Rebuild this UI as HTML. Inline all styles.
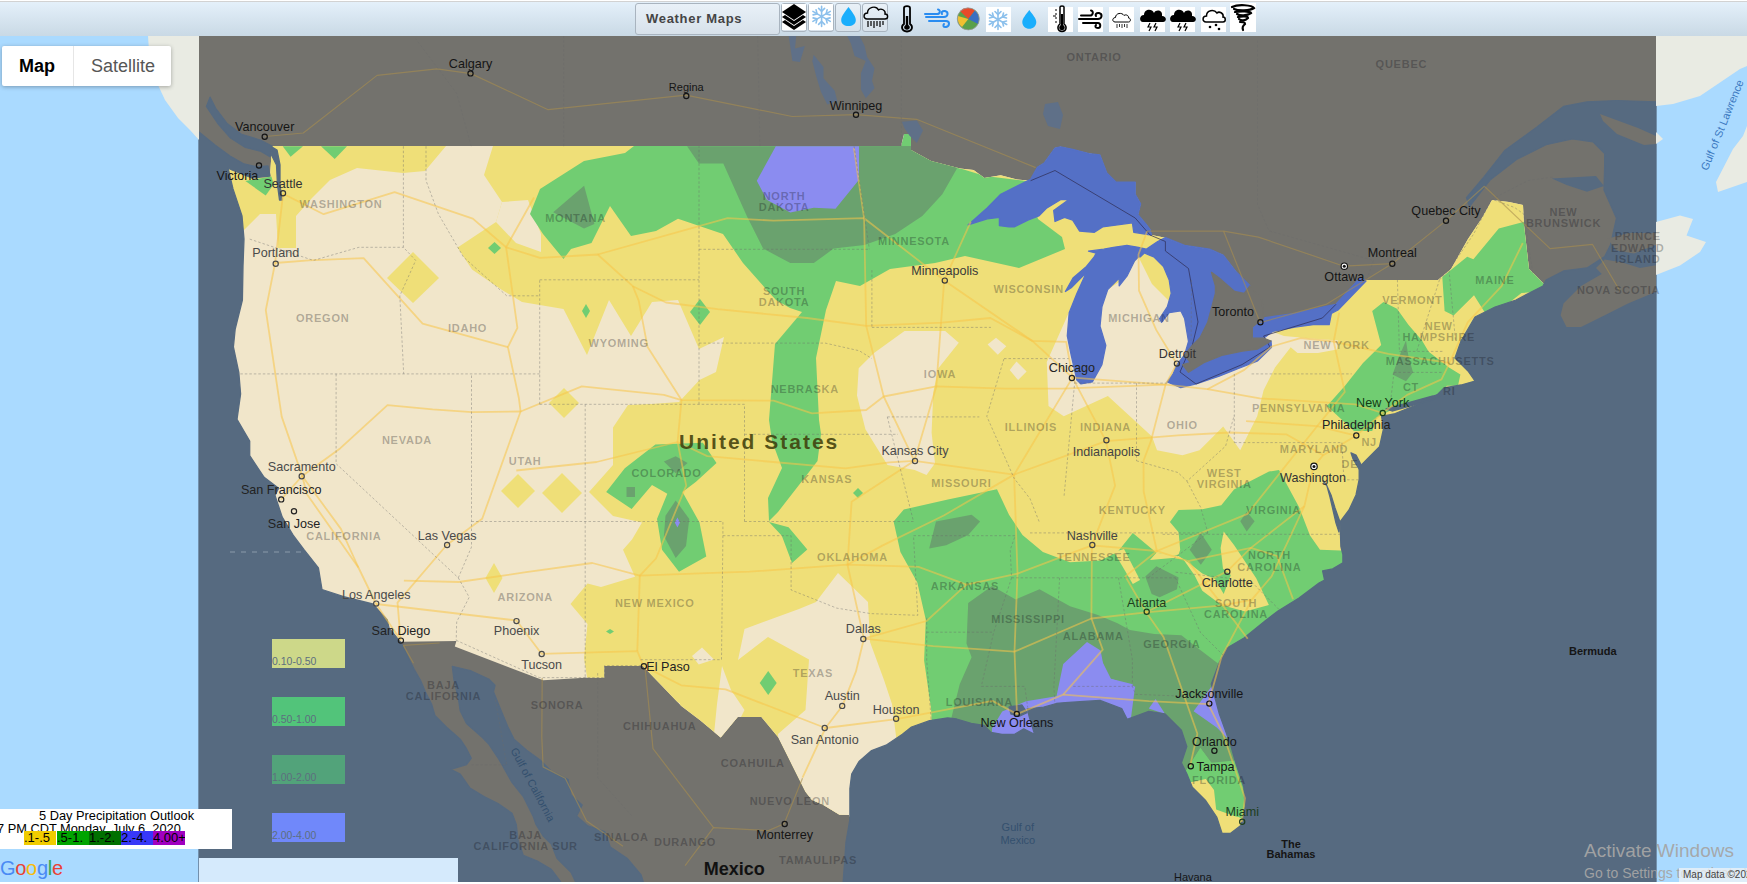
<!DOCTYPE html>
<html><head><meta charset="utf-8">
<style>
html,body{margin:0;padding:0;background:#fff;}
body{width:1747px;height:884px;overflow:hidden;position:relative;font-family:"Liberation Sans",sans-serif;}
#top{position:absolute;left:0;top:1px;width:1747px;height:35px;background:linear-gradient(#e4f0fa,#c9d9e5);border-top:1px solid #d2d2d2;box-sizing:border-box;}
#map{position:absolute;left:0;top:0;}
#wm{position:absolute;left:635px;top:3px;width:145px;height:32px;box-sizing:border-box;border:1px solid #a9b4bf;border-radius:3px;background:linear-gradient(#e9f1f8,#d7e1ea);font:bold 13px "Liberation Sans",sans-serif;color:#454545;line-height:30px;padding-left:10px;letter-spacing:0.7px;}
.ib{position:absolute;top:3px;width:26px;height:29px;box-sizing:border-box;border:1px solid #a9b4bf;border-radius:3px;background:linear-gradient(#e9f1f8,#d7e1ea);}
.wb{position:absolute;top:7px;width:25px;height:25px;background:#fff;}
#ctl{position:absolute;left:2px;top:46px;width:169px;height:40px;background:#fff;border-radius:2px;box-shadow:0 1px 4px rgba(0,0,0,.3);}
#ctl .m{position:absolute;left:0;top:0;width:70px;height:40px;font-size:18px;color:#000;text-align:center;line-height:40px;font-weight:bold;}
#ctl .s{position:absolute;left:71px;top:0;width:98px;height:40px;font-size:18px;color:#565656;text-align:center;line-height:40px;border-left:1px solid #e6e6e6;}
#leg{position:absolute;left:0;top:809px;width:232px;height:40px;background:#fff;}
#leg .t1{position:absolute;left:39px;top:-1px;font-size:12.8px;color:#000;white-space:nowrap;}
#leg .t2{position:absolute;left:-3px;top:12px;font-size:12.8px;color:#000;white-space:nowrap;}
#leg .bar{position:absolute;top:22px;height:14px;width:32px;font-size:13px;color:#000;line-height:14px;overflow:hidden;white-space:nowrap;}
#act1{position:absolute;left:1584px;top:840px;font-size:19px;color:rgba(165,165,165,.95);white-space:nowrap;}
#act2{position:absolute;left:1584px;top:865px;font-size:14px;color:rgba(165,165,165,.95);white-space:nowrap;}
#mapdata{position:absolute;left:1679px;top:868px;width:68px;height:14px;background:rgba(245,245,245,.7);font-size:10px;color:#444;line-height:14px;padding-left:4px;box-sizing:border-box;white-space:nowrap;overflow:hidden;}
#botbar{position:absolute;left:199px;top:858px;width:259px;height:24px;background:#d5eafc;}
</style></head><body>
<svg id="map" width="1747" height="884" viewBox="0 0 1747 884">
<rect x="0" y="36" width="199" height="846" fill="#aadaff"/>
<rect x="1656" y="36" width="91" height="846" fill="#aadaff"/>
<rect x="199" y="36" width="1457" height="846" fill="#73726d"/>
<clipPath id="dom"><path d="M272.0,146.0 L901.0,146.0 L904.0,134.0 L911.0,134.0 L911.0,150.0 L931.0,161.0 L960.0,168.5 L973.6,170.0 L984.4,178.0 L1000.7,175.3 L1017.0,179.4 L1030.6,180.7 L1037.4,167.2 L1044.2,163.1 L1055.0,148.1 L1060.5,146.8 L1072.7,149.5 L1089.0,153.6 L1099.9,154.9 L1106.6,172.6 L1116.1,182.1 L1135.2,182.1 L1135.2,194.3 L1140.6,203.8 L1137.9,214.7 L1146.0,224.2 L1150.1,229.6 L1151.4,235.0 L1165.4,237.7 L1184.6,245.4 L1209.6,249.2 L1223.0,255.0 L1236.5,272.3 L1238.0,285.0 L1232.0,300.0 L1240.0,322.0 L1263.0,324.0 L1295.0,318.0 L1324.7,311.0 L1336.0,308.0 L1363.0,280.0 L1438.0,280.0 L1451.0,269.0 L1468.0,239.0 L1482.0,218.0 L1492.0,200.0 L1509.0,202.0 L1523.0,205.0 L1524.0,225.0 L1529.0,269.0 L1560.0,300.0 L1600.0,350.0 L1600.0,860.0 L870.0,860.0 L849.0,815.0 L839.5,814.8 L822.6,804.6 L812.0,800.0 L805.5,791.8 L792.0,764.7 L778.4,737.5 L761.4,717.0 L737.7,717.0 L720.7,737.5 L700.4,720.6 L681.3,706.0 L642.8,665.9 L604.2,665.9 L604.2,677.8 L585.0,677.8 L543.2,680.3 L454.8,646.6 L456.4,641.1 L401.8,641.8 L380.0,642.0 L200.0,560.0 L200.0,175.0 L228.0,168.0 L270.0,176.0 Z"/></clipPath>
<path d="M272.0,146.0 L901.0,146.0 L904.0,134.0 L911.0,134.0 L911.0,150.0 L931.0,161.0 L960.0,168.5 L973.6,170.0 L984.4,178.0 L1000.7,175.3 L1017.0,179.4 L1030.6,180.7 L1037.4,167.2 L1044.2,163.1 L1055.0,148.1 L1060.5,146.8 L1072.7,149.5 L1089.0,153.6 L1099.9,154.9 L1106.6,172.6 L1116.1,182.1 L1135.2,182.1 L1135.2,194.3 L1140.6,203.8 L1137.9,214.7 L1146.0,224.2 L1150.1,229.6 L1151.4,235.0 L1165.4,237.7 L1184.6,245.4 L1209.6,249.2 L1223.0,255.0 L1236.5,272.3 L1238.0,285.0 L1232.0,300.0 L1240.0,322.0 L1263.0,324.0 L1295.0,318.0 L1324.7,311.0 L1336.0,308.0 L1363.0,280.0 L1438.0,280.0 L1451.0,269.0 L1468.0,239.0 L1482.0,218.0 L1492.0,200.0 L1509.0,202.0 L1523.0,205.0 L1524.0,225.0 L1529.0,269.0 L1560.0,300.0 L1600.0,350.0 L1600.0,860.0 L870.0,860.0 L849.0,815.0 L839.5,814.8 L822.6,804.6 L812.0,800.0 L805.5,791.8 L792.0,764.7 L778.4,737.5 L761.4,717.0 L737.7,717.0 L720.7,737.5 L700.4,720.6 L681.3,706.0 L642.8,665.9 L604.2,665.9 L604.2,677.8 L585.0,677.8 L543.2,680.3 L454.8,646.6 L456.4,641.1 L401.8,641.8 L380.0,642.0 L200.0,560.0 L200.0,175.0 L228.0,168.0 L270.0,176.0 Z" fill="#f1e6ca"/>
<g clip-path="url(#dom)">
<path d="M200.0,146.0 L446.0,146.0 L425.0,171.0 L403.0,173.0 L357.0,168.0 L330.0,180.0 L312.0,198.0 L296.0,216.0 L296.0,248.0 L278.0,248.0 L276.0,214.0 L260.0,214.0 L244.0,230.0 L200.0,230.0 Z" fill="#efdf78" />
<path d="M493.0,146.0 L1600.0,146.0 L1600.0,860.0 L900.0,850.0 L680.0,850.0 L680.0,703.0 L587.5,680.0 L584.0,658.0 L587.5,624.0 L570.5,604.0 L587.5,583.6 L601.0,587.0 L635.0,576.8 L623.0,549.7 L632.0,539.5 L642.0,522.5 L613.0,516.0 L589.0,492.0 L613.0,465.0 L613.0,427.5 L628.0,405.0 L652.0,404.0 L679.0,402.0 L699.5,380.0 L716.0,372.0 L724.0,337.0 L699.0,349.0 L678.0,300.0 L652.0,302.0 L631.0,336.0 L609.0,300.0 L587.0,355.0 L563.5,309.0 L522.0,302.0 L502.0,290.0 L472.0,269.5 L457.6,247.5 L496.0,222.0 L502.0,202.0 L484.0,175.0 Z" fill="#efdf78" />
<path d="M413.0,252.0 L439.0,278.0 L413.0,303.0 L387.0,278.0 Z" fill="#efdf78" />
<path d="M518.0,474.0 L535.0,491.0 L518.0,508.0 L501.0,491.0 Z" fill="#efdf78" />
<path d="M562.0,473.0 L582.0,493.0 L562.0,513.0 L542.0,493.0 Z" fill="#efdf78" />
<path d="M494.0,563.0 L502.5,578.0 L494.0,593.0 L485.5,578.0 Z" fill="#efdf78" />
<path d="M564.0,388.0 L579.0,403.0 L564.0,418.0 L549.0,403.0 Z" fill="#efdf78" />
<path d="M502.0,202.0 L528.0,200.0 L541.0,234.0 L541.0,252.0 L516.0,243.0 L496.0,222.0 Z" fill="#f1e6ca" />
<path d="M838.0,573.0 L868.0,602.0 L870.0,642.0 L884.0,680.0 L892.0,704.0 L897.0,744.0 L935.0,870.0 L790.0,870.0 L782.0,800.0 L778.0,734.0 L805.5,710.0 L809.0,659.5 L768.0,637.0 L738.0,660.0 L744.5,629.0 L799.0,609.0 L816.0,602.0 Z" fill="#f1e6ca" />
<path d="M722.0,666.0 L731.0,690.0 L744.5,710.0 L734.0,731.0 L721.0,738.0 L714.0,734.0 L717.0,704.0 Z" fill="#f1e6ca" />
<path d="M692.0,656.0 L702.0,647.6 L714.0,659.5 L698.7,664.6 Z" fill="#f1e6ca" />
<path d="M904.5,330.9 L945.2,330.9 L958.8,342.8 L938.4,368.2 L933.3,392.0 L931.6,432.7 L935.0,463.2 L926.5,475.1 L914.7,470.0 L887.5,465.0 L865.4,429.3 L857.0,395.4 L858.7,368.2 L874.0,353.0 Z" fill="#f1e6ca" />
<path d="M987.6,344.5 L996.0,337.7 L1006.3,346.2 L997.8,354.7 Z" fill="#f1e6ca" />
<path d="M1009.7,370.0 L1016.5,361.4 L1026.6,371.6 L1018.1,380.0 Z" fill="#f1e6ca" />
<path d="M1046.8,362.0 L1048.5,406.0 L1063.8,416.3 L1107.9,395.9 L1152.0,436.6 L1157.0,450.2 L1182.5,455.3 L1199.5,450.2 L1223.2,426.4 L1240.2,450.2 L1257.2,416.3 L1263.6,390.3 L1275.0,367.6 L1290.7,347.3 L1297.5,353.0 L1318.0,353.0 L1337.0,349.5 L1338.0,340.5 L1308.8,338.2 L1284.0,336.0 L1268.0,330.0 L1277.5,317.9 L1196.0,284.0 L1169.0,301.0 L1152.0,284.0 L1138.4,256.8 L1121.4,280.5 L1101.0,294.0 L1074.0,301.0 Z" fill="#f1e6ca" />
<path d="M282.7,146.3 L303.0,146.3 L290.6,156.7 Z" fill="#71cd72" />
<path d="M321.0,146.3 L347.0,146.3 L334.7,159.0 Z" fill="#71cd72" />
<path d="M245.4,181.0 L271.4,176.4 L273.7,184.3 L265.7,195.6 Z" fill="#71cd72" />
<path d="M488.0,248.0 L494.5,242.0 L501.0,248.0 L494.5,254.0 Z" fill="#71cd72" />
<path d="M582.0,311.0 L586.0,304.0 L590.0,311.0 L586.0,318.0 Z" fill="#71cd72" />
<path d="M690.0,312.0 L700.0,299.0 L710.0,312.0 L700.0,325.0 Z" fill="#71cd72" />
<path d="M853.0,493.0 L858.0,488.0 L863.0,493.0 L858.0,498.0 Z" fill="#71cd72" />
<path d="M759.7,683.0 L768.2,671.0 L776.7,683.0 L768.2,695.0 Z" fill="#71cd72" />
<path d="M606.0,631.5 L610.0,629.0 L614.0,631.5 L610.0,634.0 Z" fill="#71cd72" />
<path d="M634.0,146.0 L901.0,146.0 L904.0,134.0 L911.0,134.0 L911.0,150.0 L931.0,161.0 L962.0,169.0 L985.0,176.0 L1026.0,181.0 L1038.0,219.0 L1062.0,237.0 L1065.0,249.0 L1019.0,268.0 L965.0,256.0 L935.0,263.0 L890.0,269.0 L860.0,286.0 L836.0,281.0 L826.0,310.0 L816.0,358.0 L819.0,420.0 L821.0,434.0 L817.5,461.0 L799.0,485.0 L778.0,512.0 L769.0,521.0 L768.0,498.0 L782.0,468.0 L772.0,441.0 L769.0,420.0 L775.0,344.0 L802.0,312.0 L790.0,308.0 L776.0,300.0 L765.0,288.0 L743.0,263.0 L723.0,234.0 L678.0,218.7 L656.0,231.0 L631.0,236.0 L610.0,206.0 L591.5,243.0 L571.0,249.0 L563.5,259.0 L543.0,234.0 L530.0,214.0 L540.0,189.0 L584.0,161.0 L625.0,153.0 Z" fill="#71cd72" />
<path d="M769.0,522.0 L781.8,535.8 L792.0,563.0 L807.3,549.4 L788.6,527.3 Z" fill="#71cd72" />
<path d="M655.4,444.5 L702.9,442.8 L716.5,463.0 L696.0,481.8 L682.5,492.0 L699.5,522.5 L706.3,556.5 L679.0,571.7 L662.0,549.7 L657.0,519.0 L667.3,493.7 L652.0,485.0 L631.6,509.0 L606.2,492.0 L624.8,468.2 Z" fill="#71cd72" />
<path d="M893.6,521.4 L903.8,509.6 L947.9,499.4 L997.0,489.2 L1009.0,514.7 L1022.5,535.0 L1042.9,552.0 L1070.0,562.2 L1100.6,560.5 L1117.5,552.0 L1132.8,533.0 L1156.4,552.8 L1172.0,556.0 L1178.6,554.4 L1180.2,549.7 L1178.6,532.3 L1169.9,522.0 L1178.6,510.0 L1202.3,509.3 L1221.3,505.3 L1234.0,489.5 L1269.0,471.6 L1279.0,470.0 L1299.0,507.0 L1310.0,535.4 L1320.0,549.7 L1600.0,560.0 L1600.0,860.0 L934.0,760.0 L931.0,708.0 L924.1,660.6 L925.8,619.8 L917.3,582.5 L900.4,552.0 Z" fill="#71cd72" />
<path d="M1372.2,311.0 L1383.5,302.0 L1397.0,308.8 L1408.4,324.7 L1422.0,340.5 L1428.7,351.8 L1449.0,367.6 L1460.4,374.4 L1458.0,385.7 L1446.8,385.7 L1440.0,394.8 L1433.3,398.2 L1390.3,410.6 L1376.7,417.4 L1372.2,431.0 L1354.0,431.0 L1327.0,406.0 L1345.0,385.7 L1363.0,363.0 L1381.2,345.0 Z" fill="#71cd72" />
<path d="M1449.0,271.5 L1467.2,256.8 L1473.4,259.2 L1498.8,228.6 L1524.3,221.8 L1530.5,268.0 L1541.9,277.0 L1560.0,290.0 L1521.5,293.0 L1510.0,302.0 L1494.3,311.0 L1485.3,313.3 L1474.0,295.2 L1453.6,315.6 L1444.6,311.0 L1442.3,277.0 Z" fill="#71cd72" />
<path d="M687.1,146.3 L961.0,146.0 L956.7,169.0 L942.3,194.3 L922.3,216.0 L895.2,234.0 L864.5,245.0 L833.7,248.6 L813.8,263.0 L790.3,263.0 L763.1,248.6 L746.8,216.0 L723.3,163.5 L698.9,163.5 Z" fill="#6aa26e" />
<path d="M553.2,212.2 L584.1,185.7 L594.4,224.0 L584.0,228.4 Z" fill="#6aa26e" />
<path d="M663.9,461.4 L675.7,456.3 L687.6,463.0 L675.7,473.3 Z" fill="#6aa26e" />
<path d="M626.5,487.0 L635.0,487.0 L635.0,497.0 L626.5,497.0 Z" fill="#6aa26e" />
<path d="M675.7,500.5 L689.3,519.0 L686.0,546.0 L675.7,558.0 L663.9,536.0 L665.5,515.7 Z" fill="#6aa26e" />
<path d="M929.2,548.6 L936.0,521.4 L971.6,514.7 L980.1,521.4 L968.2,535.0 L946.2,545.2 Z" fill="#6aa26e" />
<path d="M968.2,602.9 L992.0,585.9 L1015.7,599.5 L1039.5,589.3 L1070.0,606.3 L1097.2,614.8 L1117.5,623.2 L1129.9,629.9 L1154.3,633.9 L1181.4,635.3 L1195.0,646.1 L1216.7,662.4 L1240.0,680.0 L1240.0,760.0 L1211.3,762.8 L1200.4,747.9 L1184.1,773.7 L1150.0,760.0 L958.0,760.0 L951.3,718.3 L959.7,684.3 L971.6,657.2 L966.5,643.6 Z" fill="#6aa26e" />
<path d="M1145.3,576.6 L1156.4,566.3 L1178.6,577.4 L1177.0,589.3 L1159.6,597.2 L1151.7,594.0 Z" fill="#6aa26e" />
<path d="M1240.3,521.2 L1246.7,511.7 L1254.6,521.2 L1246.7,531.5 Z" fill="#6aa26e" />
<path d="M1189.7,549.7 L1200.8,533.0 L1211.8,549.7 L1200.8,564.7 Z" fill="#6aa26e" />
<path d="M1406.0,340.5 L1408.4,356.3 L1413.0,372.2 L1406.0,381.2 L1392.5,374.4 L1399.3,356.3 Z" fill="#6aa26e" />
<path d="M1156.4,552.8 L1178.6,556.0 L1188.0,562.3 L1202.3,573.4 L1215.0,579.0 L1223.7,594.0 L1230.8,575.0 L1223.0,568.7 L1220.6,548.0 L1223.7,531.5 L1234.0,545.0 L1246.7,564.0 L1256.2,578.2 L1268.9,605.1 L1245.1,611.4 L1221.3,605.1 L1202.3,590.8 L1194.4,575.0 L1183.3,559.2 L1172.3,558.0 L1150.0,560.0 Z" fill="#efdf78" />
<path d="M1114.0,552.0 L1132.8,584.0 L1140.0,580.0 L1124.0,549.0 Z" fill="#efdf78" />
<path d="M1184.1,773.7 L1200.4,747.9 L1211.3,762.8 L1235.7,776.4 L1243.8,790.0 L1260.0,825.2 L1189.6,800.0 Z" fill="#71cd72" />
<path d="M1180.0,784.5 L1205.8,779.1 L1214.0,790.0 L1216.7,814.4 L1238.4,817.1 L1260.0,828.0 L1227.5,850.0 L1216.7,833.4 L1180.0,795.4 Z" fill="#efdf78" />
<path d="M775.8,146.3 L859.0,146.3 L859.0,179.8 L835.5,208.8 L813.8,207.8 L790.3,212.4 L766.7,199.7 L756.8,180.7 Z" fill="#8b8cf0" />
<path d="M1087.0,641.9 L1100.6,650.4 L1105.7,677.5 L1132.8,684.3 L1134.5,691.0 L1129.4,730.0 L992.0,740.0 L992.0,728.4 L1002.2,711.5 L1026.0,701.3 L1056.5,696.2 L1063.2,664.0 Z" fill="#8b8cf0" />
<path d="M1100.0,657.0 L1110.9,678.7 L1135.3,686.8 L1127.1,719.4 L1100.0,703.0 Z" fill="#8b8cf0" />
<path d="M1148.8,708.5 L1155.6,699.0 L1165.1,714.0 Z" fill="#8b8cf0" />
<path d="M1193.6,711.3 L1211.3,686.8 L1214.0,681.4 L1227.5,738.4 L1216.7,727.5 Z" fill="#8b8cf0" />
<path d="M677.4,517.5 L680.0,522.5 L677.4,527.5 L674.8,522.5 Z" fill="#8b8cf0" />
</g>
<path d="M199.0,132.0 L215.0,145.0 L230.0,156.0 L244.0,164.0 L258.0,167.0 L268.0,166.0 L270.0,176.0 L252.0,178.0 L232.0,170.0 L228.0,168.0 L233.0,189.0 L242.0,216.0 L244.0,239.0 L243.0,266.0 L242.4,300.0 L235.2,329.0 L233.4,347.0 L238.8,372.4 L240.6,394.0 L237.0,419.4 L249.7,441.1 L249.7,455.6 L264.1,477.3 L278.6,488.2 L275.0,495.4 L282.2,517.1 L293.1,535.2 L304.0,549.7 L318.4,567.8 L322.0,589.5 L343.7,596.7 L372.7,604.0 L387.2,620.0 L389.0,628.0 L400.9,642.7 L403.6,648.1 L409.5,660.0 L414.3,669.5 L420.6,680.6 L425.3,691.7 L431.7,704.4 L434.9,715.4 L447.5,728.1 L460.2,739.2 L466.5,748.7 L471.3,758.2 L466.5,764.6 L450.7,769.3 L460.2,774.1 L470.0,788.0 L484.0,796.5 L498.0,803.5 L512.0,813.3 L516.3,824.5 L518.0,840.0 L523.3,855.4 L537.3,861.0 L551.3,869.4 L559.8,880.6 L562.0,884.0 L199.0,884.0 Z" fill="#566a80" stroke="#566a80" stroke-width="1.3" stroke-linejoin="round"/>
<path d="M452.3,666.3 L471.3,671.0 L488.7,679.0 L495.0,685.3 L493.5,691.7 L499.8,707.5 L507.7,726.5 L514.0,739.2 L526.7,750.3 L540.1,760.0 L551.3,771.2 L568.2,779.6 L571.0,795.0 L582.2,804.9 L576.6,816.1 L587.8,825.9 L604.6,831.5 L610.3,847.0 L627.1,858.2 L641.1,875.0 L643.9,884.0 L576.6,884.0 L571.0,872.2 L557.0,858.2 L551.3,844.1 L543.0,835.7 L536.0,824.5 L533.1,816.1 L523.3,796.5 L512.0,782.4 L500.9,762.8 L498.2,758.2 L488.7,744.0 L482.4,737.6 L466.5,723.4 L460.2,710.7 L458.6,699.6 L454.0,680.0 Z" fill="#566a80" stroke="#566a80" stroke-width="1.3" stroke-linejoin="round"/>
<path d="M843.0,884.0 L846.0,842.0 L849.9,819.4 L849.9,788.6 L851.7,774.1 L859.0,761.5 L871.6,750.6 L886.0,745.2 L902.4,734.3 L911.5,727.0 L929.6,720.7 L947.7,718.0 L956.7,719.0 L971.2,723.4 L983.9,725.3 L991.1,732.5 L1002.0,734.3 L1014.6,734.3 L1023.7,728.9 L1034.6,734.3 L1029.1,716.2 L1027.3,709.0 L1043.6,707.2 L1056.3,703.5 L1065.3,702.6 L1080.0,701.7 L1100.0,700.4 L1121.7,708.5 L1127.1,719.4 L1148.8,711.3 L1165.1,714.0 L1181.4,730.3 L1186.8,746.5 L1181.4,762.8 L1186.8,773.7 L1192.3,787.2 L1205.8,800.8 L1216.7,817.0 L1222.1,833.4 L1230.3,833.4 L1241.1,825.2 L1245.2,806.2 L1243.8,787.2 L1235.7,762.8 L1230.3,743.8 L1219.4,714.0 L1211.3,684.1 L1219.4,662.4 L1227.0,648.0 L1244.0,638.0 L1265.0,621.0 L1278.0,611.0 L1299.0,598.0 L1319.0,583.0 L1324.6,580.0 L1322.6,570.9 L1332.7,568.9 L1342.9,562.8 L1342.9,554.7 L1340.9,546.5 L1340.0,522.0 L1349.0,510.0 L1356.0,495.0 L1359.2,479.4 L1359.2,469.2 L1361.2,465.1 L1367.3,459.0 L1379.5,446.8 L1383.6,428.5 L1381.6,416.3 L1394.0,414.0 L1421.0,403.0 L1434.0,398.0 L1444.0,388.0 L1461.0,385.0 L1475.0,381.0 L1468.0,371.0 L1455.0,358.0 L1461.0,341.0 L1475.0,317.0 L1495.0,307.0 L1516.0,300.0 L1543.0,286.0 L1546.0,280.0 L1563.5,271.0 L1587.0,268.0 L1604.7,256.5 L1610.6,244.7 L1616.5,218.2 L1604.0,190.0 L1604.7,165.0 L1604.7,153.5 L1593.0,141.8 L1572.4,138.8 L1546.0,144.7 L1516.5,159.4 L1490.0,180.0 L1469.4,206.5 L1466.5,197.6 L1484.0,177.0 L1504.7,150.6 L1537.0,127.0 L1563.5,106.5 L1587.0,102.0 L1616.5,100.6 L1656.0,102.0 L1656.0,884.0 Z" fill="#566a80" stroke="#566a80" stroke-width="1.3" stroke-linejoin="round"/>
<path d="M1009.0,707.0 L1022.0,705.0 L1027.0,712.6 L1020.0,716.0 L1011.0,714.0 Z" fill="#566a80" stroke="#566a80" stroke-width="1.3" stroke-linejoin="round"/>
<path d="M1340.0,522.0 L1335.0,508.0 L1331.0,495.0 L1326.0,484.0 L1323.0,481.0 L1327.0,486.0 L1330.0,497.0 L1333.0,510.0 L1336.0,523.0 L1339.0,532.0 Z" fill="#566a80" stroke="#566a80" stroke-width="1.3" stroke-linejoin="round"/>
<path d="M1359.2,469.2 L1353.1,459.0 L1351.0,452.9 L1356.0,455.0 L1361.2,465.1 Z" fill="#566a80" stroke="#566a80" stroke-width="1.3" stroke-linejoin="round"/>
<path d="M1386.0,409.0 L1433.0,396.0 L1446.0,392.0 L1435.0,399.0 L1392.0,411.0 Z" fill="#566a80" stroke="#566a80" stroke-width="1.3" stroke-linejoin="round"/>
<path d="M210.1,97.2 L215.7,108.4 L226.8,123.2 L241.7,134.4 L260.2,140.0 L272.0,146.0 L270.0,156.6 L260.2,151.0 L245.4,147.4 L230.5,138.0 L217.6,123.2 L206.4,106.5 Z" fill="#566a80" stroke="#566a80" stroke-width="1.3" stroke-linejoin="round"/>
<path d="M272.0,147.0 L277.0,150.0 L280.0,165.0 L280.0,185.0 L282.0,200.0 L279.5,200.0 L277.5,185.0 L276.5,165.0 L271.0,154.0 Z" fill="#566a80" stroke="#566a80" stroke-width="1.3" stroke-linejoin="round"/>
<path d="M847.2,36.0 L859.6,36.0 L864.6,46.0 L867.1,57.1 L874.5,68.3 L872.0,80.8 L874.5,88.2 L865.8,98.2 L860.9,89.5 L860.9,73.3 L865.8,60.9 L854.6,55.9 L850.9,43.5 Z" fill="#5f7088" />
<path d="M813.6,54.7 L823.5,67.1 L823.5,78.3 L834.7,90.7 L837.2,100.7 L827.3,104.4 L821.0,92.0 L816.1,75.8 L812.3,60.9 Z" fill="#5f7088" />
<path d="M901.9,121.8 L916.8,120.6 L923.0,130.5 L916.8,143.0 L909.4,135.5 L904.4,128.0 Z" fill="#5f7088" />
<path d="M1045.0,104.0 L1058.0,102.0 L1063.0,115.0 L1060.0,129.0 L1048.0,126.0 L1043.0,114.0 Z" fill="#5f7088" />
<path d="M788.7,36.0 L796.2,36.0 L795.0,48.4 L804.9,46.0 L799.9,62.1 L792.4,60.9 Z" fill="#5f7088" />
<path d="M1551.8,178.5 L1596.0,176.0 L1604.0,186.0 L1587.0,191.8 L1566.5,185.0 Z" fill="#566a80" />
<path d="M1560.6,315.3 L1563.5,303.5 L1581.0,286.0 L1601.8,274.0 L1596.0,268.0 L1604.7,259.4 L1622.4,262.4 L1640.0,268.0 L1656.0,265.3 L1656.0,291.8 L1628.0,303.5 L1604.7,315.3 L1581.0,327.0 L1566.5,327.0 Z" fill="#73726d" />
<path d="M1600.0,114.0 L1638.0,128.0 L1656.0,136.0 L1656.0,144.0 L1644.0,145.0 L1617.0,134.0 L1603.0,121.0 Z" fill="#73726d" />
<path d="M1607.6,238.8 L1628.0,233.0 L1656.0,233.0 L1656.0,244.7 L1634.0,253.5 L1616.5,250.6 Z" fill="#73726d" />
<path d="M968.1,224.9 L987.2,207.9 L1000.7,194.3 L1017.0,186.2 L1030.6,179.4 L1037.4,167.2 L1044.2,163.1 L1055.0,148.1 L1060.5,146.8 L1072.7,149.5 L1089.0,153.6 L1099.9,154.9 L1106.6,172.6 L1116.1,182.1 L1135.2,182.1 L1135.2,194.3 L1140.6,203.8 L1137.9,214.7 L1146.0,224.2 L1150.1,229.6 L1151.4,235.0 L1133.8,232.3 L1132.4,222.8 L1102.6,226.9 L1094.4,232.3 L1079.5,231.0 L1072.7,220.1 L1064.5,217.4 L1055.0,221.5 L1053.7,210.6 L1068.6,199.7 L1060.5,199.7 L1046.9,207.9 L1038.8,216.0 L1027.9,220.1 L1014.3,226.9 L1008.9,226.9 L999.4,225.5 L999.4,217.4 L987.2,218.8 Z" fill="#5470c6" stroke="#5470c6" stroke-width="1.3" stroke-linejoin="round"/>
<path d="M1088.5,251.2 L1096.2,253.0 L1094.2,257.0 L1086.5,266.5 L1073.0,278.0 L1065.4,291.5 L1071.2,287.7 L1086.5,272.3 L1076.9,293.5 L1069.2,312.7 L1067.3,335.8 L1071.2,355.0 L1076.9,380.0 L1080.8,383.8 L1092.3,381.9 L1101.9,364.6 L1105.8,345.4 L1100.0,326.2 L1101.9,306.9 L1107.7,289.6 L1119.2,278.0 L1119.2,285.8 L1126.9,276.2 L1134.6,260.8 L1138.5,256.9 L1140.4,256.9 L1144.2,253.0 L1153.8,256.9 L1163.5,266.5 L1169.2,280.0 L1171.2,293.5 L1167.3,306.9 L1159.6,318.5 L1161.5,322.3 L1169.2,312.7 L1180.8,310.8 L1184.6,318.5 L1188.5,341.5 L1184.6,355.0 L1192.3,345.4 L1200.0,337.7 L1207.7,322.3 L1215.4,293.5 L1215.4,285.8 L1211.5,272.3 L1219.2,278.0 L1234.6,291.5 L1244.2,293.5 L1250.0,285.8 L1236.5,272.3 L1223.0,255.0 L1209.6,249.2 L1184.6,245.4 L1165.4,237.7 L1157.7,241.5 L1146.2,249.2 L1138.5,247.3 L1126.9,245.4 L1113.5,247.3 L1103.8,249.2 Z" fill="#5470c6" stroke="#5470c6" stroke-width="1.3" stroke-linejoin="round"/>
<path d="M1176.9,364.6 L1173.0,374.2 L1167.3,381.9 L1180.8,387.7 L1196.2,383.8 L1219.2,376.2 L1238.5,368.5 L1257.7,360.8 L1271.5,347.3 L1271.0,341.0 L1257.7,349.0 L1242.3,351.2 L1223.0,355.0 L1203.8,362.7 L1188.5,372.3 L1182.7,364.6 L1190.4,362.7 L1184.6,355.0 Z" fill="#5470c6" stroke="#5470c6" stroke-width="1.3" stroke-linejoin="round"/>
<path d="M1252.3,327.0 L1263.6,317.9 L1295.0,313.3 L1324.7,306.6 L1336.0,304.3 L1360.0,278.0 L1366.0,281.0 L1338.0,310.0 L1331.4,313.3 L1329.2,324.7 L1313.3,324.7 L1295.0,327.0 L1272.6,331.4 L1263.6,338.2 L1252.3,338.2 Z" fill="#5470c6" stroke="#5470c6" stroke-width="1.3" stroke-linejoin="round"/>
<polyline points="1030.6,180.7 1055,170.5 1135.2,218 1150,235 1165.4,241.5 1165.4,251 1188.5,268.5 1198,322 1192.3,345.4 1186,358 1180,372 1196,384 1242,364.6 1270,347 1263.6,336 1322.4,318 1336,304.3" fill="none" stroke="#30305a" stroke-width="1" stroke-opacity="0.75"/>
<path d="M1211.5,272.3 L1219.2,278.0 L1234.6,291.5 L1244.2,293.5 L1250.0,285.8 L1262.0,300.0 L1263.6,317.9 L1252.3,327.0 L1252.3,338.2 L1263.6,338.2 L1271.0,341.0 L1257.7,349.0 L1242.3,351.2 L1223.0,355.0 L1203.8,362.7 L1188.5,372.3 L1182.7,364.6 L1190.4,362.7 L1184.6,355.0 L1192.3,345.4 L1200.0,337.7 L1207.7,322.3 L1215.4,293.5 L1215.4,285.8 Z" fill="#73726d" stroke="#73726d" stroke-width="1.3" stroke-linejoin="round"/>
<path d="M1656.0,36.0 L1747.0,36.0 L1747.0,66.0 L1740.0,69.0 L1720.0,82.6 L1700.0,96.0 L1673.0,104.0 L1656.0,106.0 Z" fill="#e9ebe3" />
<path d="M1656.0,132.0 L1663.0,139.0 L1656.0,144.0 Z" fill="#e9ebe3" />
<path d="M1747.0,126.0 L1743.0,136.0 L1733.0,149.0 L1716.0,182.0 L1718.0,192.0 L1747.0,182.0 Z" fill="#e9ebe3" />
<path d="M1656.0,222.0 L1680.0,215.6 L1693.0,219.0 L1686.5,235.5 L1706.0,242.0 L1700.0,252.0 L1680.0,265.5 L1656.0,275.0 Z" fill="#e9ebe3" />
<path d="M148.0,36.0 L199.0,36.0 L199.0,140.0 L190.0,130.0 L178.0,118.0 L165.0,100.0 L158.0,85.0 L150.0,65.0 Z" fill="#e9ebe3" />
<g clip-path="url(#dom)"><polyline points="283.1,193.8 275.1,263.0 265.8,310.1 281.7,416.6 302.2,476.0 306.8,494.0 358.4,567.5 376.1,604.0 400.7,640.3" fill="none" stroke="#f7c548" stroke-opacity="0.55" stroke-width="1.8" stroke-linejoin="round"/><polyline points="283.1,193.8 323.6,214.2 394.6,192.1 472.8,218.6 506.1,247.3 539.9,257.8 597.7,254.5 632.8,286.2 666.0,302.5 717.6,309.2 807.0,318.0 866.2,325.9 941.9,322.7 990.4,318.0 1032.3,340.9 1072.5,377.6 1165.6,384.6 1207.4,389.2 1244.3,369.9 1271.6,346.5 1300.5,338.1 1333.7,341.5 1388.3,353.9 1449.5,362.9" fill="none" stroke="#f7c548" stroke-opacity="0.55" stroke-width="1.8" stroke-linejoin="round"/><polyline points="281.1,499.5 302.2,476.0 340.4,448.2 387.5,405.2 432.6,409.4 471.7,412.1 520.6,411.5 581.8,386.4 663.9,394.9 681.5,400.1 773.6,400.7 812.0,413.3 866.2,410.0 883.7,396.5 936.3,386.4 1005.4,388.6 1062.3,388.6 1165.6,384.6" fill="none" stroke="#f7c548" stroke-opacity="0.55" stroke-width="1.8" stroke-linejoin="round"/><polyline points="1207.4,389.2 1259.8,398.3 1355.3,404.3 1382.6,413.0" fill="none" stroke="#f7c548" stroke-opacity="0.55" stroke-width="1.8" stroke-linejoin="round"/><polyline points="516.3,470.5 596.6,462.0 677.6,442.0 707.2,456.1 845.5,468.4 889.4,462.3 914.4,460.8 1014.1,474.6 1106.0,441.1 1177.9,435.4 1229.7,432.5 1286.2,434.3 1323.2,455.2" fill="none" stroke="#f7c548" stroke-opacity="0.55" stroke-width="1.8" stroke-linejoin="round"/><polyline points="403.9,580.6 458.7,582.0 526.1,572.2 592.3,563.0 639.8,575.6 706.5,573.1 749.5,571.7 847.5,564.7 918.5,566.9 966.5,584.7 1017.5,573.6 1091.9,545.3 1156.9,551.0 1188.1,561.1 1250.9,547.9 1277.1,556.0 1293.0,599.1" fill="none" stroke="#f7c548" stroke-opacity="0.55" stroke-width="1.8" stroke-linejoin="round"/><polyline points="376.1,604.0 516.5,620.5 541.5,653.8 637.3,651.1 643.5,666.1 681.2,685.3 725.6,689.3 825.5,728.0 896.4,719.1 992.4,700.9 1017.0,714.1 1063.2,694.6 1148.7,701.2 1208.3,704.1" fill="none" stroke="#f7c548" stroke-opacity="0.55" stroke-width="1.8" stroke-linejoin="round"/><polyline points="802.5,777.7 825.5,728.0 842.5,705.7 855.9,671.7 863.9,638.7 847.5,564.7 851.6,501.8 914.4,460.8 936.3,386.4 944.2,280.4 970.8,221.6" fill="none" stroke="#f7c548" stroke-opacity="0.55" stroke-width="1.8" stroke-linejoin="round"/><polyline points="637.3,651.1 639.8,575.6 656.0,558.5 686.2,485.6 677.6,442.0 681.5,400.1 647.6,347.1 638.7,300.6 632.8,286.2" fill="none" stroke="#f7c548" stroke-opacity="0.55" stroke-width="1.8" stroke-linejoin="round"/><polyline points="400.7,640.3 397.5,602.7 446.7,545.0 482.2,518.7 520.6,411.5 518.8,397.7 507.9,347.1 517.4,327.8 506.1,247.3 534.0,197.5" fill="none" stroke="#f7c548" stroke-opacity="0.55" stroke-width="1.8" stroke-linejoin="round"/><polyline points="1241.8,822.0 1245.0,798.2 1222.9,733.5 1208.3,704.1 1221.3,657.5 1251.6,599.9 1271.6,576.4 1304.4,506.1 1313.5,466.7 1323.2,455.2 1356.0,435.7 1382.6,413.0 1407.2,394.9 1441.5,379.4 1449.5,362.9 1467.7,322.4 1501.6,286.2 1522.8,243.0" fill="none" stroke="#f7c548" stroke-opacity="0.55" stroke-width="1.8" stroke-linejoin="round"/><polyline points="1190.1,766.1 1197.4,733.7 1163.5,637.0 1146.2,612.3 1125.3,576.4 1156.9,551.0 1143.7,491.7 1143.5,460.8 1150.8,441.4 1165.6,384.6 1176.7,363.8 1156.2,329.9 1139.0,290.7 1138.5,254.5 1147.1,231.2" fill="none" stroke="#f7c548" stroke-opacity="0.55" stroke-width="1.8" stroke-linejoin="round"/><polyline points="1063.2,694.6 1102.8,649.7 1091.4,618.5 1091.9,545.3 1115.1,485.6 1106.0,441.1 1072.5,377.6" fill="none" stroke="#f7c548" stroke-opacity="0.55" stroke-width="1.8" stroke-linejoin="round"/><polyline points="1017.0,714.1 1014.5,651.6 1017.5,573.6 1014.1,474.6 1072.5,377.6" fill="none" stroke="#f7c548" stroke-opacity="0.55" stroke-width="1.8" stroke-linejoin="round"/><polyline points="863.9,638.7 933.3,646.2 1014.5,651.6 1091.4,618.5 1146.2,612.3 1222.7,605.4 1251.6,599.9" fill="none" stroke="#f7c548" stroke-opacity="0.55" stroke-width="1.8" stroke-linejoin="round"/><polyline points="597.7,254.5 727.6,218.2 773.4,220.6 864.1,218.2 944.2,280.4 1032.3,340.9 1066.2,341.8 1072.5,377.6" fill="none" stroke="#f7c548" stroke-opacity="0.55" stroke-width="1.8" stroke-linejoin="round"/><polyline points="914.4,460.8 883.7,396.5 866.2,325.9 864.1,218.2 853.9,147.9" fill="none" stroke="#f7c548" stroke-opacity="0.55" stroke-width="1.8" stroke-linejoin="round"/><polyline points="275.1,263.0 308.8,260.4 363.6,258.1 422.6,323.7 507.9,347.1" fill="none" stroke="#f7c548" stroke-opacity="0.55" stroke-width="1.8" stroke-linejoin="round"/><polyline points="1156.9,551.0 1247.5,513.8 1317.1,426.2 1344.8,391.9 1333.7,341.5 1339.2,312.6" fill="none" stroke="#f7c548" stroke-opacity="0.55" stroke-width="1.8" stroke-linejoin="round"/><polyline points="1146.2,612.3 1227.0,571.4 1250.9,547.9 1304.4,506.1" fill="none" stroke="#f7c548" stroke-opacity="0.55" stroke-width="1.8" stroke-linejoin="round"/><polyline points="1188.1,561.1 1222.7,605.4 1247.7,638.7" fill="none" stroke="#f7c548" stroke-opacity="0.55" stroke-width="1.8" stroke-linejoin="round"/><polyline points="847.5,564.7 882.3,545.6 943.8,515.5 1014.1,474.6" fill="none" stroke="#f7c548" stroke-opacity="0.55" stroke-width="1.8" stroke-linejoin="round"/><polyline points="863.9,638.7 926.5,621.0 966.5,584.7" fill="none" stroke="#f7c548" stroke-opacity="0.55" stroke-width="1.8" stroke-linejoin="round"/><polyline points="302.2,476.0 340.9,528.9 358.4,567.5" fill="none" stroke="#f7c548" stroke-opacity="0.55" stroke-width="1.8" stroke-linejoin="round"/><polyline points="1246.1,421.1 1317.1,426.2 1356.0,435.7" fill="none" stroke="#f7c548" stroke-opacity="0.55" stroke-width="1.8" stroke-linejoin="round"/></g>
<g><polyline points="265.1,136.5 303.3,133.0 377.1,75.4 436.9,68.8 471.0,73.6 548.1,109.7 686.0,95.1 792.2,116.5 856.2,114.7 916.5,119.3 1035.7,167.6" fill="none" stroke="#a88d4e" stroke-opacity="0.6" stroke-width="1.2" stroke-linejoin="round"/><polyline points="1260.2,322.7 1326.0,304.4 1392.4,263.6 1446.1,220.6 1484.3,186.3 1550.1,248.6 1592.4,244.3 1619.9,291.0" fill="none" stroke="#a88d4e" stroke-opacity="0.6" stroke-width="1.2" stroke-linejoin="round"/><polyline points="1343.9,266.2 1392.4,263.6" fill="none" stroke="#a88d4e" stroke-opacity="0.6" stroke-width="1.2" stroke-linejoin="round"/><polyline points="1260.2,322.7 1223.6,231.2" fill="none" stroke="#a88d4e" stroke-opacity="0.6" stroke-width="1.2" stroke-linejoin="round"/><polyline points="1343.9,266.2 1258.4,237.1 1223.6,231.2 1147.1,231.2" fill="none" stroke="#a88d4e" stroke-opacity="0.6" stroke-width="1.2" stroke-linejoin="round"/><polyline points="802.5,778.2 784.1,823.8 768.4,830.6 713.5,827.6 685.1,865.7" fill="none" stroke="#a88d4e" stroke-opacity="0.6" stroke-width="1.2" stroke-linejoin="round"/><polyline points="645.1,668.0 653.0,748.6 713.5,827.6" fill="none" stroke="#a88d4e" stroke-opacity="0.6" stroke-width="1.2" stroke-linejoin="round"/><polyline points="542.2,678.1 541.8,737.1 543.1,766.9 565.2,778.2 586.6,821.0 623.0,846.2" fill="none" stroke="#a88d4e" stroke-opacity="0.6" stroke-width="1.2" stroke-linejoin="round"/><polyline points="403.4,645.4 439.6,643.0" fill="none" stroke="#a88d4e" stroke-opacity="0.6" stroke-width="1.2" stroke-linejoin="round"/><polyline points="403.4,645.4 413.5,663.2" fill="none" stroke="#a88d4e" stroke-opacity="0.6" stroke-width="1.2" stroke-linejoin="round"/></g>
<g><polyline points="240.3,373.9 539.7,373.9" fill="none" stroke="#6a6a6a" stroke-opacity="0.45" stroke-width="0.9" stroke-dasharray="2.5,2"/><polyline points="336.1,373.9 336.1,463.7 458.3,577.8" fill="none" stroke="#6a6a6a" stroke-opacity="0.45" stroke-width="0.9" stroke-dasharray="2.5,2"/><polyline points="458.3,577.8 471.5,547.0 471.5,373.9" fill="none" stroke="#6a6a6a" stroke-opacity="0.45" stroke-width="0.9" stroke-dasharray="2.5,2"/><polyline points="458.3,577.8 469.2,597.2 456.7,621.8 456.2,640.3" fill="none" stroke="#6a6a6a" stroke-opacity="0.45" stroke-width="0.9" stroke-dasharray="2.5,2"/><polyline points="471.5,521.5 722.9,521.5 722.9,535.7 721.5,659.7 640.5,659.7" fill="none" stroke="#6a6a6a" stroke-opacity="0.45" stroke-width="0.9" stroke-dasharray="2.5,2"/><polyline points="585.2,404.3 585.2,677.6" fill="none" stroke="#6a6a6a" stroke-opacity="0.45" stroke-width="0.9" stroke-dasharray="2.5,2"/><polyline points="539.7,404.3 539.7,279.8" fill="none" stroke="#6a6a6a" stroke-opacity="0.45" stroke-width="0.9" stroke-dasharray="2.5,2"/><polyline points="539.7,404.3 744.5,404.3 744.5,521.5" fill="none" stroke="#6a6a6a" stroke-opacity="0.45" stroke-width="0.9" stroke-dasharray="2.5,2"/><polyline points="539.7,279.8 699.0,279.8" fill="none" stroke="#6a6a6a" stroke-opacity="0.45" stroke-width="0.9" stroke-dasharray="2.5,2"/><polyline points="699.0,404.3 699.0,146.2" fill="none" stroke="#6a6a6a" stroke-opacity="0.45" stroke-width="0.9" stroke-dasharray="2.5,2"/><polyline points="699.0,249.3 869.4,249.3" fill="none" stroke="#6a6a6a" stroke-opacity="0.45" stroke-width="0.9" stroke-dasharray="2.5,2"/><polyline points="699.0,343.1 825.2,343.1 859.4,350.8 871.9,358.6" fill="none" stroke="#6a6a6a" stroke-opacity="0.45" stroke-width="0.9" stroke-dasharray="2.5,2"/><polyline points="744.5,434.3 898.0,434.3" fill="none" stroke="#6a6a6a" stroke-opacity="0.45" stroke-width="0.9" stroke-dasharray="2.5,2"/><polyline points="744.5,521.5 913.5,521.5 887.3,416.9" fill="none" stroke="#6a6a6a" stroke-opacity="0.45" stroke-width="0.9" stroke-dasharray="2.5,2"/><polyline points="722.9,535.7 791.1,535.7 791.1,590.0 836.6,608.1 870.7,613.6 917.8,615.3 913.5,535.7" fill="none" stroke="#6a6a6a" stroke-opacity="0.45" stroke-width="0.9" stroke-dasharray="2.5,2"/><polyline points="926.7,617.7 926.7,660.0 931.2,720.7" fill="none" stroke="#6a6a6a" stroke-opacity="0.45" stroke-width="0.9" stroke-dasharray="2.5,2"/><polyline points="926.7,632.2 992.0,632.2" fill="none" stroke="#6a6a6a" stroke-opacity="0.45" stroke-width="0.9" stroke-dasharray="2.5,2"/><polyline points="913.5,535.7 1015.2,535.7 1010.2,549.8 1011.6,577.8" fill="none" stroke="#6a6a6a" stroke-opacity="0.45" stroke-width="0.9" stroke-dasharray="2.5,2"/><polyline points="1030.0,532.9 1207.9,532.9" fill="none" stroke="#6a6a6a" stroke-opacity="0.45" stroke-width="0.9" stroke-dasharray="2.5,2"/><polyline points="1162.6,534.3 1340.1,534.3" fill="none" stroke="#6a6a6a" stroke-opacity="0.45" stroke-width="0.9" stroke-dasharray="2.5,2"/><polyline points="1011.6,577.8 1175.4,577.8" fill="none" stroke="#6a6a6a" stroke-opacity="0.45" stroke-width="0.9" stroke-dasharray="2.5,2"/><polyline points="1059.6,577.8 1053.9,686.4 1055.0,706.2" fill="none" stroke="#6a6a6a" stroke-opacity="0.45" stroke-width="0.9" stroke-dasharray="2.5,2"/><polyline points="1073.2,686.4 1132.4,686.4 1135.5,694.3 1202.9,697.0" fill="none" stroke="#6a6a6a" stroke-opacity="0.45" stroke-width="0.9" stroke-dasharray="2.5,2"/><polyline points="1118.5,577.8 1132.4,659.7 1132.4,686.4" fill="none" stroke="#6a6a6a" stroke-opacity="0.45" stroke-width="0.9" stroke-dasharray="2.5,2"/><polyline points="981.3,686.4 1024.8,686.4 1027.7,707.5" fill="none" stroke="#6a6a6a" stroke-opacity="0.45" stroke-width="0.9" stroke-dasharray="2.5,2"/><polyline points="871.9,327.4 990.9,327.4" fill="none" stroke="#6a6a6a" stroke-opacity="0.45" stroke-width="0.9" stroke-dasharray="2.5,2"/><polyline points="871.9,270.1 871.9,327.4" fill="none" stroke="#6a6a6a" stroke-opacity="0.45" stroke-width="0.9" stroke-dasharray="2.5,2"/><polyline points="854.1,146.2 869.4,249.3" fill="none" stroke="#6a6a6a" stroke-opacity="0.45" stroke-width="0.9" stroke-dasharray="2.5,2"/><polyline points="1004.0,358.6 1068.7,358.6" fill="none" stroke="#6a6a6a" stroke-opacity="0.45" stroke-width="0.9" stroke-dasharray="2.5,2"/><polyline points="887.3,416.9 979.3,416.9" fill="none" stroke="#6a6a6a" stroke-opacity="0.45" stroke-width="0.9" stroke-dasharray="2.5,2"/><polyline points="1074.8,381.3 1064.1,495.7" fill="none" stroke="#6a6a6a" stroke-opacity="0.45" stroke-width="0.9" stroke-dasharray="2.5,2"/><polyline points="1136.5,383.1 1136.5,460.8" fill="none" stroke="#6a6a6a" stroke-opacity="0.45" stroke-width="0.9" stroke-dasharray="2.5,2"/><polyline points="1074.8,383.1 1167.6,383.1" fill="none" stroke="#6a6a6a" stroke-opacity="0.45" stroke-width="0.9" stroke-dasharray="2.5,2"/><polyline points="1234.3,373.9 1234.3,442.6" fill="none" stroke="#6a6a6a" stroke-opacity="0.45" stroke-width="0.9" stroke-dasharray="2.5,2"/><polyline points="1251.6,373.9 1351.7,373.9" fill="none" stroke="#6a6a6a" stroke-opacity="0.45" stroke-width="0.9" stroke-dasharray="2.5,2"/><polyline points="1234.3,442.6 1341.9,442.6" fill="none" stroke="#6a6a6a" stroke-opacity="0.45" stroke-width="0.9" stroke-dasharray="2.5,2"/><polyline points="1397.4,279.8 1399.4,351.4" fill="none" stroke="#6a6a6a" stroke-opacity="0.45" stroke-width="0.9" stroke-dasharray="2.5,2"/><polyline points="1399.4,351.4 1444.0,351.4" fill="none" stroke="#6a6a6a" stroke-opacity="0.45" stroke-width="0.9" stroke-dasharray="2.5,2"/><polyline points="1394.0,372.4 1442.2,372.4" fill="none" stroke="#6a6a6a" stroke-opacity="0.45" stroke-width="0.9" stroke-dasharray="2.5,2"/><polyline points="1394.0,372.4 1390.6,401.3" fill="none" stroke="#6a6a6a" stroke-opacity="0.45" stroke-width="0.9" stroke-dasharray="2.5,2"/><polyline points="1439.5,279.8 1416.7,351.4" fill="none" stroke="#6a6a6a" stroke-opacity="0.45" stroke-width="0.9" stroke-dasharray="2.5,2"/><polyline points="1449.0,270.1 1455.4,339.9" fill="none" stroke="#6a6a6a" stroke-opacity="0.45" stroke-width="0.9" stroke-dasharray="2.5,2"/><polyline points="1341.9,442.6 1343.9,479.8 1358.7,479.8" fill="none" stroke="#6a6a6a" stroke-opacity="0.45" stroke-width="0.9" stroke-dasharray="2.5,2"/><polyline points="403.4,146.2 403.4,247.3 415.7,260.4 399.8,295.8 403.7,373.9" fill="none" stroke="#6a6a6a" stroke-opacity="0.45" stroke-width="0.9" stroke-dasharray="2.5,2"/><polyline points="249.7,239.1 313.4,260.4 358.9,247.3 403.4,247.3" fill="none" stroke="#6a6a6a" stroke-opacity="0.45" stroke-width="0.9" stroke-dasharray="2.5,2"/><polyline points="426.0,146.2 426.0,180.5 438.5,214.2 463.5,257.1 506.7,295.8 539.7,295.8" fill="none" stroke="#6a6a6a" stroke-opacity="0.45" stroke-width="0.9" stroke-dasharray="2.5,2"/><polyline points="1039.1,521.5 1030.0,498.6 1014.1,478.3 986.8,416.3 1004.0,358.6" fill="none" stroke="#6a6a6a" stroke-opacity="0.45" stroke-width="0.9" stroke-dasharray="2.5,2"/><polyline points="1011.6,577.8 993.6,632.7 981.3,686.4" fill="none" stroke="#6a6a6a" stroke-opacity="0.45" stroke-width="0.9" stroke-dasharray="2.5,2"/><polyline points="1136.5,460.8 1177.9,472.5 1187.0,481.2 1225.6,446.1 1234.3,415.1" fill="none" stroke="#6a6a6a" stroke-opacity="0.45" stroke-width="0.9" stroke-dasharray="2.5,2"/><polyline points="1187.0,481.2 1200.6,507.2 1207.9,532.9" fill="none" stroke="#6a6a6a" stroke-opacity="0.45" stroke-width="0.9" stroke-dasharray="2.5,2"/><polyline points="1207.9,532.9 1148.3,577.8" fill="none" stroke="#6a6a6a" stroke-opacity="0.45" stroke-width="0.9" stroke-dasharray="2.5,2"/><polyline points="1175.6,572.2 1225.6,577.8 1252.9,583.3 1279.1,609.5" fill="none" stroke="#6a6a6a" stroke-opacity="0.45" stroke-width="0.9" stroke-dasharray="2.5,2"/><polyline points="1175.4,577.8 1200.6,632.7 1226.3,658.3" fill="none" stroke="#6a6a6a" stroke-opacity="0.45" stroke-width="0.9" stroke-dasharray="2.5,2"/><polyline points="1191.5,279.8 1191.1,343.1" fill="none" stroke="#6a6a6a" stroke-opacity="0.45" stroke-width="0.9" stroke-dasharray="2.5,2"/><polyline points="563.6,146.2 563.6,1.4" fill="none" stroke="#6a6a6a" stroke-opacity="0.45" stroke-width="0.9" stroke-dasharray="2.5,2"/><polyline points="759.9,146.2 757.0,1.4" fill="none" stroke="#6a6a6a" stroke-opacity="0.45" stroke-width="0.9" stroke-dasharray="2.5,2"/><polyline points="901.4,146.2 901.4,1.4" fill="none" stroke="#6a6a6a" stroke-opacity="0.45" stroke-width="0.9" stroke-dasharray="2.5,2"/><polyline points="471.2,146.2 456.7,93.4 415.7,38.8" fill="none" stroke="#6a6a6a" stroke-opacity="0.45" stroke-width="0.9" stroke-dasharray="2.5,2"/><polyline points="1366.7,279.8 1373.5,260.4 1268.9,230.8 1257.5,204.2 1257.5,38.8" fill="none" stroke="#6a6a6a" stroke-opacity="0.45" stroke-width="0.9" stroke-dasharray="2.5,2"/><polyline points="1439.5,279.8 1449.0,270.1 1473.6,234.1 1491.8,199.2 1514.6,207.5 1523.9,214.2 1532.8,273.3" fill="none" stroke="#6a6a6a" stroke-opacity="0.45" stroke-width="0.9" stroke-dasharray="2.5,2"/><polyline points="1491.8,199.2 1528.2,180.5 1553.2,177.1" fill="none" stroke="#6a6a6a" stroke-opacity="0.45" stroke-width="0.9" stroke-dasharray="2.5,2"/><polyline points="1605.6,250.6 1614.7,247.3" fill="none" stroke="#6a6a6a" stroke-opacity="0.45" stroke-width="0.9" stroke-dasharray="2.5,2"/><polyline points="456.2,640.3 539.3,677.6 604.6,677.6 604.6,665.6 642.6,665.6" fill="none" stroke="#6a6a6a" stroke-opacity="0.45" stroke-width="0.9" stroke-dasharray="2.5,2"/><polyline points="495.4,699.6 506.7,764.8 470.3,764.8" fill="none" stroke="#6a6a6a" stroke-opacity="0.45" stroke-width="0.9" stroke-dasharray="2.5,2"/><polyline points="597.7,673.1 597.7,777.7 631.9,815.9" fill="none" stroke="#6a6a6a" stroke-opacity="0.45" stroke-width="0.9" stroke-dasharray="2.5,2"/></g>
<line x1="230" y1="552" x2="304" y2="552" stroke="#8a9aaa" stroke-width="1" stroke-dasharray="5,6"/>
<text x="470.5" y="68.3" text-anchor="middle" font-size="12.6" fill="#151515" font-family="Liberation Sans">Calgary</text>
<circle cx="470.5" cy="73.4" r="2.6" fill="none" stroke="#151515" stroke-width="1.2"/>
<text x="686.3" y="91.3" text-anchor="middle" font-size="11" fill="#151515" font-family="Liberation Sans">Regina</text>
<circle cx="686.3" cy="96" r="2.6" fill="none" stroke="#151515" stroke-width="1.2"/>
<text x="856" y="109.5" text-anchor="middle" font-size="12.6" fill="#151515" font-family="Liberation Sans">Winnipeg</text>
<circle cx="856" cy="114.7" r="2.6" fill="none" stroke="#151515" stroke-width="1.2"/>
<text x="264.7" y="130.7" text-anchor="middle" font-size="12.6" fill="#151515" font-family="Liberation Sans">Vancouver</text>
<circle cx="264.7" cy="136.7" r="2.6" fill="none" stroke="#151515" stroke-width="1.2"/>
<text x="237.4" y="179.5" text-anchor="middle" font-size="12.6" fill="#151515" font-family="Liberation Sans">Victoria</text>
<circle cx="259" cy="165.5" r="2.6" fill="none" stroke="#151515" stroke-width="1.2"/>
<text x="283" y="188.2" text-anchor="middle" font-size="12.6" fill="#333" font-family="Liberation Sans">Seattle</text>
<circle cx="283" cy="193.3" r="2.6" fill="none" stroke="#333" stroke-width="1.2"/>
<text x="275.7" y="257.3" text-anchor="middle" font-size="12.6" fill="#4a4a4a" font-family="Liberation Sans">Portland</text>
<circle cx="275.7" cy="263.8" r="2.6" fill="none" stroke="#4a4a4a" stroke-width="1.2"/>
<text x="944.8" y="274.5" text-anchor="middle" font-size="12.6" fill="#3a3a3a" font-family="Liberation Sans">Minneapolis</text>
<circle cx="944.8" cy="280.6" r="2.6" fill="none" stroke="#3a3a3a" stroke-width="1.2"/>
<text x="1071.9" y="371.5" text-anchor="middle" font-size="12.6" fill="#222" font-family="Liberation Sans">Chicago</text>
<circle cx="1071.9" cy="378" r="2.6" fill="none" stroke="#222" stroke-width="1.2"/>
<text x="1177.4" y="357.5" text-anchor="middle" font-size="12.6" fill="#333" font-family="Liberation Sans">Detroit</text>
<circle cx="1176.9" cy="363.6" r="2.6" fill="none" stroke="#333" stroke-width="1.2"/>
<text x="1233" y="316.3" text-anchor="middle" font-size="12.6" fill="#151515" font-family="Liberation Sans">Toronto</text>
<circle cx="1260.4" cy="322.3" r="2.6" fill="none" stroke="#151515" stroke-width="1.2"/>
<text x="1344.3" y="281.3" text-anchor="middle" font-size="12.6" fill="#151515" font-family="Liberation Sans">Ottawa</text>
<text x="1392.3" y="257.3" text-anchor="middle" font-size="12.6" fill="#151515" font-family="Liberation Sans">Montreal</text>
<circle cx="1392.3" cy="263.8" r="2.6" fill="none" stroke="#151515" stroke-width="1.2"/>
<text x="1446" y="214.5" text-anchor="middle" font-size="12.6" fill="#151515" font-family="Liberation Sans">Quebec City</text>
<circle cx="1446" cy="220.7" r="2.6" fill="none" stroke="#151515" stroke-width="1.2"/>
<text x="1382.7" y="407.4" text-anchor="middle" font-size="12.6" fill="#143a14" font-family="Liberation Sans">New York</text>
<circle cx="1382.7" cy="413" r="2.6" fill="none" stroke="#143a14" stroke-width="1.2"/>
<text x="1356.3" y="429.0" text-anchor="middle" font-size="12.6" fill="#222" font-family="Liberation Sans">Philadelphia</text>
<circle cx="1356.3" cy="435.5" r="2.6" fill="none" stroke="#222" stroke-width="1.2"/>
<text x="1313" y="482.2" text-anchor="middle" font-size="12.6" fill="#333" font-family="Liberation Sans">Washington</text>
<text x="1106.4" y="455.8" text-anchor="middle" font-size="12.6" fill="#444" font-family="Liberation Sans">Indianapolis</text>
<circle cx="1106.4" cy="440.3" r="2.6" fill="none" stroke="#444" stroke-width="1.2"/>
<text x="915" y="455.0" text-anchor="middle" font-size="12.6" fill="#4a4a4a" font-family="Liberation Sans">Kansas City</text>
<circle cx="915" cy="461" r="2.6" fill="none" stroke="#4a4a4a" stroke-width="1.2"/>
<text x="1092.3" y="539.7" text-anchor="middle" font-size="12.6" fill="#444" font-family="Liberation Sans">Nashville</text>
<circle cx="1092.3" cy="545" r="2.6" fill="none" stroke="#444" stroke-width="1.2"/>
<text x="1227.3" y="586.5" text-anchor="middle" font-size="12.6" fill="#333" font-family="Liberation Sans">Charlotte</text>
<circle cx="1227.3" cy="571.7" r="2.6" fill="none" stroke="#333" stroke-width="1.2"/>
<text x="1146.7" y="606.5" text-anchor="middle" font-size="12.6" fill="#1e3e1e" font-family="Liberation Sans">Atlanta</text>
<circle cx="1146.7" cy="611.7" r="2.6" fill="none" stroke="#1e3e1e" stroke-width="1.2"/>
<text x="1016.8" y="727.1" text-anchor="middle" font-size="12.6" fill="#151515" font-family="Liberation Sans">New Orleans</text>
<circle cx="1016.8" cy="713.9" r="2.6" fill="none" stroke="#151515" stroke-width="1.2"/>
<text x="1209.3" y="698.4" text-anchor="middle" font-size="12.6" fill="#151515" font-family="Liberation Sans">Jacksonville</text>
<circle cx="1209.3" cy="703.6" r="2.6" fill="none" stroke="#151515" stroke-width="1.2"/>
<text x="1214.4" y="745.6" text-anchor="middle" font-size="12.6" fill="#151515" font-family="Liberation Sans">Orlando</text>
<circle cx="1214.4" cy="750.8" r="2.6" fill="none" stroke="#151515" stroke-width="1.2"/>
<text x="1215.5" y="770.7" text-anchor="middle" font-size="12.6" fill="#151515" font-family="Liberation Sans">Tampa</text>
<circle cx="1190.8" cy="766.2" r="2.6" fill="none" stroke="#151515" stroke-width="1.2"/>
<text x="1242.2" y="816.4" text-anchor="middle" font-size="12.6" fill="#1e3e1e" font-family="Liberation Sans">Miami</text>
<circle cx="1242.2" cy="821.7" r="2.6" fill="none" stroke="#1e3e1e" stroke-width="1.2"/>
<text x="863.3" y="632.8" text-anchor="middle" font-size="12.6" fill="#4a4a4a" font-family="Liberation Sans">Dallas</text>
<circle cx="863.3" cy="639" r="2.6" fill="none" stroke="#4a4a4a" stroke-width="1.2"/>
<text x="842.2" y="700.1" text-anchor="middle" font-size="12.6" fill="#4a4a4a" font-family="Liberation Sans">Austin</text>
<circle cx="842.2" cy="705.9" r="2.6" fill="none" stroke="#4a4a4a" stroke-width="1.2"/>
<text x="896.1" y="714.0" text-anchor="middle" font-size="12.6" fill="#4a4a4a" font-family="Liberation Sans">Houston</text>
<circle cx="896.1" cy="718.7" r="2.6" fill="none" stroke="#4a4a4a" stroke-width="1.2"/>
<text x="824.7" y="743.8" text-anchor="middle" font-size="12.6" fill="#4a4a4a" font-family="Liberation Sans">San Antonio</text>
<circle cx="824.7" cy="728" r="2.6" fill="none" stroke="#4a4a4a" stroke-width="1.2"/>
<text x="668" y="670.8" text-anchor="middle" font-size="12.6" fill="#222" font-family="Liberation Sans">El Paso</text>
<circle cx="643.9" cy="666.3" r="2.6" fill="none" stroke="#222" stroke-width="1.2"/>
<text x="541.7" y="668.8" text-anchor="middle" font-size="12.6" fill="#4a4a4a" font-family="Liberation Sans">Tucson</text>
<circle cx="541.7" cy="654" r="2.6" fill="none" stroke="#4a4a4a" stroke-width="1.2"/>
<text x="516.5" y="635.4" text-anchor="middle" font-size="12.6" fill="#4a4a4a" font-family="Liberation Sans">Phoenix</text>
<circle cx="516.5" cy="621.1" r="2.6" fill="none" stroke="#4a4a4a" stroke-width="1.2"/>
<text x="376.2" y="598.9" text-anchor="middle" font-size="12.6" fill="#4a4a4a" font-family="Liberation Sans">Los Angeles</text>
<circle cx="376.2" cy="603.6" r="2.6" fill="none" stroke="#4a4a4a" stroke-width="1.2"/>
<text x="400.9" y="634.9" text-anchor="middle" font-size="12.6" fill="#222" font-family="Liberation Sans">San Diego</text>
<circle cx="400.9" cy="640.6" r="2.6" fill="none" stroke="#222" stroke-width="1.2"/>
<text x="447.1" y="539.8" text-anchor="middle" font-size="12.6" fill="#4a4a4a" font-family="Liberation Sans">Las Vegas</text>
<circle cx="447.1" cy="545" r="2.6" fill="none" stroke="#4a4a4a" stroke-width="1.2"/>
<text x="301.7" y="470.5" text-anchor="middle" font-size="12.6" fill="#4a4a4a" font-family="Liberation Sans">Sacramento</text>
<circle cx="301.7" cy="476.2" r="2.6" fill="none" stroke="#4a4a4a" stroke-width="1.2"/>
<text x="281.2" y="493.5" text-anchor="middle" font-size="12.6" fill="#222" font-family="Liberation Sans">San Francisco</text>
<circle cx="281.2" cy="499.4" r="2.6" fill="none" stroke="#222" stroke-width="1.2"/>
<text x="294" y="527.5" text-anchor="middle" font-size="12.6" fill="#222" font-family="Liberation Sans">San Jose</text>
<circle cx="294" cy="511.2" r="2.6" fill="none" stroke="#222" stroke-width="1.2"/>
<text x="784.7" y="838.8" text-anchor="middle" font-size="12.6" fill="#151515" font-family="Liberation Sans">Monterrey</text>
<circle cx="784.7" cy="824" r="2.6" fill="none" stroke="#151515" stroke-width="1.2"/>
<text x="1192.9" y="881.1" text-anchor="middle" font-size="11" fill="#151515" font-family="Liberation Sans">Havana</text>
<circle cx="1344.3" cy="266.2" r="3.2" fill="#fff" stroke="#111" stroke-width="1.2"/><circle cx="1344.3" cy="266.2" r="1.5" fill="#111"/>
<circle cx="1314" cy="466.4" r="3.2" fill="#fff" stroke="#111" stroke-width="1.2"/><circle cx="1314" cy="466.4" r="1.5" fill="#111"/>
<text x="341" y="207.9" text-anchor="middle" font-size="11" font-weight="bold" letter-spacing="0.75" fill="#101018" fill-opacity="0.3" font-family="Liberation Sans">WASHINGTON</text>
<text x="322.7" y="321.5" text-anchor="middle" font-size="11" font-weight="bold" letter-spacing="0.75" fill="#101018" fill-opacity="0.3" font-family="Liberation Sans">OREGON</text>
<text x="467.6" y="331.6" text-anchor="middle" font-size="11" font-weight="bold" letter-spacing="0.75" fill="#101018" fill-opacity="0.3" font-family="Liberation Sans">IDAHO</text>
<text x="575.5" y="221.8" text-anchor="middle" font-size="11" font-weight="bold" letter-spacing="0.75" fill="#101018" fill-opacity="0.3" font-family="Liberation Sans">MONTANA</text>
<text x="618.7" y="346.5" text-anchor="middle" font-size="11" font-weight="bold" letter-spacing="0.75" fill="#101018" fill-opacity="0.3" font-family="Liberation Sans">WYOMING</text>
<text x="784.1" y="199.7" text-anchor="middle" font-size="11" font-weight="bold" letter-spacing="0.75" fill="#101018" fill-opacity="0.3" font-family="Liberation Sans">NORTH</text>
<text x="784.1" y="210.7" text-anchor="middle" font-size="11" font-weight="bold" letter-spacing="0.75" fill="#101018" fill-opacity="0.3" font-family="Liberation Sans">DAKOTA</text>
<text x="784.1" y="294.7" text-anchor="middle" font-size="11" font-weight="bold" letter-spacing="0.75" fill="#101018" fill-opacity="0.3" font-family="Liberation Sans">SOUTH</text>
<text x="784.1" y="305.7" text-anchor="middle" font-size="11" font-weight="bold" letter-spacing="0.75" fill="#101018" fill-opacity="0.3" font-family="Liberation Sans">DAKOTA</text>
<text x="804.8" y="393" text-anchor="middle" font-size="11" font-weight="bold" letter-spacing="0.75" fill="#101018" fill-opacity="0.3" font-family="Liberation Sans">NEBRASKA</text>
<text x="914" y="244.8" text-anchor="middle" font-size="11" font-weight="bold" letter-spacing="0.75" fill="#101018" fill-opacity="0.3" font-family="Liberation Sans">MINNESOTA</text>
<text x="407" y="443.5" text-anchor="middle" font-size="11" font-weight="bold" letter-spacing="0.75" fill="#101018" fill-opacity="0.3" font-family="Liberation Sans">NEVADA</text>
<text x="525.2" y="464.8" text-anchor="middle" font-size="11" font-weight="bold" letter-spacing="0.75" fill="#101018" fill-opacity="0.3" font-family="Liberation Sans">UTAH</text>
<text x="666.5" y="476.6" text-anchor="middle" font-size="11" font-weight="bold" letter-spacing="0.75" fill="#101018" fill-opacity="0.3" font-family="Liberation Sans">COLORADO</text>
<text x="826.8" y="482.8" text-anchor="middle" font-size="11" font-weight="bold" letter-spacing="0.75" fill="#101018" fill-opacity="0.3" font-family="Liberation Sans">KANSAS</text>
<text x="343.9" y="539.8" text-anchor="middle" font-size="11" font-weight="bold" letter-spacing="0.75" fill="#101018" fill-opacity="0.3" font-family="Liberation Sans">CALIFORNIA</text>
<text x="525.2" y="601" text-anchor="middle" font-size="11" font-weight="bold" letter-spacing="0.75" fill="#101018" fill-opacity="0.3" font-family="Liberation Sans">ARIZONA</text>
<text x="654.7" y="606.6" text-anchor="middle" font-size="11" font-weight="bold" letter-spacing="0.75" fill="#101018" fill-opacity="0.3" font-family="Liberation Sans">NEW MEXICO</text>
<text x="852.5" y="561.4" text-anchor="middle" font-size="11" font-weight="bold" letter-spacing="0.75" fill="#101018" fill-opacity="0.3" font-family="Liberation Sans">OKLAHOMA</text>
<text x="812.9" y="677" text-anchor="middle" font-size="11" font-weight="bold" letter-spacing="0.75" fill="#101018" fill-opacity="0.3" font-family="Liberation Sans">TEXAS</text>
<text x="443.5" y="688.8" text-anchor="middle" font-size="11" font-weight="bold" letter-spacing="0.75" fill="#101018" fill-opacity="0.3" font-family="Liberation Sans">BAJA</text>
<text x="443.5" y="700.1" text-anchor="middle" font-size="11" font-weight="bold" letter-spacing="0.75" fill="#101018" fill-opacity="0.3" font-family="Liberation Sans">CALIFORNIA</text>
<text x="557.1" y="708.9" text-anchor="middle" font-size="11" font-weight="bold" letter-spacing="0.75" fill="#101018" fill-opacity="0.3" font-family="Liberation Sans">SONORA</text>
<text x="659.8" y="730" text-anchor="middle" font-size="11" font-weight="bold" letter-spacing="0.75" fill="#101018" fill-opacity="0.3" font-family="Liberation Sans">CHIHUAHUA</text>
<text x="752.8" y="766.9" text-anchor="middle" font-size="11" font-weight="bold" letter-spacing="0.75" fill="#101018" fill-opacity="0.3" font-family="Liberation Sans">COAHUILA</text>
<text x="789.8" y="804.9" text-anchor="middle" font-size="11" font-weight="bold" letter-spacing="0.75" fill="#101018" fill-opacity="0.3" font-family="Liberation Sans">NUEVO LEON</text>
<text x="621.3" y="840.9" text-anchor="middle" font-size="11" font-weight="bold" letter-spacing="0.75" fill="#101018" fill-opacity="0.3" font-family="Liberation Sans">SINALOA</text>
<text x="685" y="846" text-anchor="middle" font-size="11" font-weight="bold" letter-spacing="0.75" fill="#101018" fill-opacity="0.3" font-family="Liberation Sans">DURANGO</text>
<text x="818" y="863.5" text-anchor="middle" font-size="11" font-weight="bold" letter-spacing="0.75" fill="#101018" fill-opacity="0.3" font-family="Liberation Sans">TAMAULIPAS</text>
<text x="525.7" y="838.8" text-anchor="middle" font-size="11" font-weight="bold" letter-spacing="0.75" fill="#101018" fill-opacity="0.3" font-family="Liberation Sans">BAJA</text>
<text x="525.7" y="850.1" text-anchor="middle" font-size="11" font-weight="bold" letter-spacing="0.75" fill="#101018" fill-opacity="0.3" font-family="Liberation Sans">CALIFORNIA SUR</text>
<text x="1094" y="60.6" text-anchor="middle" font-size="11" font-weight="bold" letter-spacing="0.75" fill="#101018" fill-opacity="0.3" font-family="Liberation Sans">ONTARIO</text>
<text x="1401.4" y="67.8" text-anchor="middle" font-size="11" font-weight="bold" letter-spacing="0.75" fill="#101018" fill-opacity="0.3" font-family="Liberation Sans">QUEBEC</text>
<text x="1563.5" y="216" text-anchor="middle" font-size="11" font-weight="bold" letter-spacing="0.75" fill="#101018" fill-opacity="0.3" font-family="Liberation Sans">NEW</text>
<text x="1563.5" y="226.6" text-anchor="middle" font-size="11" font-weight="bold" letter-spacing="0.75" fill="#101018" fill-opacity="0.3" font-family="Liberation Sans">BRUNSWICK</text>
<text x="1637.8" y="240" text-anchor="middle" font-size="11" font-weight="bold" letter-spacing="0.75" fill="#101018" fill-opacity="0.3" font-family="Liberation Sans">PRINCE</text>
<text x="1637.8" y="251.5" text-anchor="middle" font-size="11" font-weight="bold" letter-spacing="0.75" fill="#101018" fill-opacity="0.3" font-family="Liberation Sans">EDWARD</text>
<text x="1637.8" y="262.5" text-anchor="middle" font-size="11" font-weight="bold" letter-spacing="0.75" fill="#101018" fill-opacity="0.3" font-family="Liberation Sans">ISLAND</text>
<text x="1618.6" y="293.7" text-anchor="middle" font-size="11" font-weight="bold" letter-spacing="0.75" fill="#101018" fill-opacity="0.3" font-family="Liberation Sans">NOVA SCOTIA</text>
<text x="1494.9" y="283.6" text-anchor="middle" font-size="11" font-weight="bold" letter-spacing="0.75" fill="#101018" fill-opacity="0.3" font-family="Liberation Sans">MAINE</text>
<text x="1412.4" y="303.8" text-anchor="middle" font-size="11" font-weight="bold" letter-spacing="0.75" fill="#101018" fill-opacity="0.3" font-family="Liberation Sans">VERMONT</text>
<text x="1438.8" y="329.7" text-anchor="middle" font-size="11" font-weight="bold" letter-spacing="0.75" fill="#101018" fill-opacity="0.3" font-family="Liberation Sans">NEW</text>
<text x="1438.8" y="340.7" text-anchor="middle" font-size="11" font-weight="bold" letter-spacing="0.75" fill="#101018" fill-opacity="0.3" font-family="Liberation Sans">HAMPSHIRE</text>
<text x="1440.2" y="364.7" text-anchor="middle" font-size="11" font-weight="bold" letter-spacing="0.75" fill="#101018" fill-opacity="0.3" font-family="Liberation Sans">MASSACHUSETTS</text>
<text x="1336.6" y="349.4" text-anchor="middle" font-size="11" font-weight="bold" letter-spacing="0.75" fill="#101018" fill-opacity="0.3" font-family="Liberation Sans">NEW YORK</text>
<text x="1411" y="390.6" text-anchor="middle" font-size="11" font-weight="bold" letter-spacing="0.75" fill="#101018" fill-opacity="0.3" font-family="Liberation Sans">CT</text>
<text x="1449.3" y="395" text-anchor="middle" font-size="11" font-weight="bold" letter-spacing="0.75" fill="#101018" fill-opacity="0.3" font-family="Liberation Sans">RI</text>
<text x="1369.2" y="446.2" text-anchor="middle" font-size="11" font-weight="bold" letter-spacing="0.75" fill="#101018" fill-opacity="0.3" font-family="Liberation Sans">NJ</text>
<text x="1298.7" y="412.2" text-anchor="middle" font-size="11" font-weight="bold" letter-spacing="0.75" fill="#101018" fill-opacity="0.3" font-family="Liberation Sans">PENNSYLVANIA</text>
<text x="1314" y="452.5" text-anchor="middle" font-size="11" font-weight="bold" letter-spacing="0.75" fill="#101018" fill-opacity="0.3" font-family="Liberation Sans">MARYLAND</text>
<text x="1350" y="467.9" text-anchor="middle" font-size="11" font-weight="bold" letter-spacing="0.75" fill="#101018" fill-opacity="0.3" font-family="Liberation Sans">DE</text>
<text x="1139" y="321.5" text-anchor="middle" font-size="11" font-weight="bold" letter-spacing="0.75" fill="#101018" fill-opacity="0.3" font-family="Liberation Sans">MICHIGAN</text>
<text x="1028.7" y="293.2" text-anchor="middle" font-size="11" font-weight="bold" letter-spacing="0.75" fill="#101018" fill-opacity="0.3" font-family="Liberation Sans">WISCONSIN</text>
<text x="940" y="378" text-anchor="middle" font-size="11" font-weight="bold" letter-spacing="0.75" fill="#101018" fill-opacity="0.3" font-family="Liberation Sans">IOWA</text>
<text x="1031" y="431.4" text-anchor="middle" font-size="11" font-weight="bold" letter-spacing="0.75" fill="#101018" fill-opacity="0.3" font-family="Liberation Sans">ILLINOIS</text>
<text x="1105.5" y="431.4" text-anchor="middle" font-size="11" font-weight="bold" letter-spacing="0.75" fill="#101018" fill-opacity="0.3" font-family="Liberation Sans">INDIANA</text>
<text x="1182.2" y="429.4" text-anchor="middle" font-size="11" font-weight="bold" letter-spacing="0.75" fill="#101018" fill-opacity="0.3" font-family="Liberation Sans">OHIO</text>
<text x="961.4" y="487.4" text-anchor="middle" font-size="11" font-weight="bold" letter-spacing="0.75" fill="#101018" fill-opacity="0.3" font-family="Liberation Sans">MISSOURI</text>
<text x="1224.2" y="476.6" text-anchor="middle" font-size="11" font-weight="bold" letter-spacing="0.75" fill="#101018" fill-opacity="0.3" font-family="Liberation Sans">WEST</text>
<text x="1224.2" y="487.9" text-anchor="middle" font-size="11" font-weight="bold" letter-spacing="0.75" fill="#101018" fill-opacity="0.3" font-family="Liberation Sans">VIRGINIA</text>
<text x="1273.5" y="513.6" text-anchor="middle" font-size="11" font-weight="bold" letter-spacing="0.75" fill="#101018" fill-opacity="0.3" font-family="Liberation Sans">VIRGINIA</text>
<text x="1132.3" y="513.6" text-anchor="middle" font-size="11" font-weight="bold" letter-spacing="0.75" fill="#101018" fill-opacity="0.3" font-family="Liberation Sans">KENTUCKY</text>
<text x="1093.8" y="561.3" text-anchor="middle" font-size="11" font-weight="bold" letter-spacing="0.75" fill="#101018" fill-opacity="0.3" font-family="Liberation Sans">TENNESSEE</text>
<text x="1269.4" y="559.3" text-anchor="middle" font-size="11" font-weight="bold" letter-spacing="0.75" fill="#101018" fill-opacity="0.3" font-family="Liberation Sans">NORTH</text>
<text x="1269.4" y="571" text-anchor="middle" font-size="11" font-weight="bold" letter-spacing="0.75" fill="#101018" fill-opacity="0.3" font-family="Liberation Sans">CAROLINA</text>
<text x="1236" y="606.5" text-anchor="middle" font-size="11" font-weight="bold" letter-spacing="0.75" fill="#101018" fill-opacity="0.3" font-family="Liberation Sans">SOUTH</text>
<text x="1236" y="617.8" text-anchor="middle" font-size="11" font-weight="bold" letter-spacing="0.75" fill="#101018" fill-opacity="0.3" font-family="Liberation Sans">CAROLINA</text>
<text x="965" y="589.5" text-anchor="middle" font-size="11" font-weight="bold" letter-spacing="0.75" fill="#101018" fill-opacity="0.3" font-family="Liberation Sans">ARKANSAS</text>
<text x="1028.1" y="622.9" text-anchor="middle" font-size="11" font-weight="bold" letter-spacing="0.75" fill="#101018" fill-opacity="0.3" font-family="Liberation Sans">MISSISSIPPI</text>
<text x="1093.3" y="639.9" text-anchor="middle" font-size="11" font-weight="bold" letter-spacing="0.75" fill="#101018" fill-opacity="0.3" font-family="Liberation Sans">ALABAMA</text>
<text x="1171.8" y="647.6" text-anchor="middle" font-size="11" font-weight="bold" letter-spacing="0.75" fill="#101018" fill-opacity="0.3" font-family="Liberation Sans">GEORGIA</text>
<text x="979.3" y="705.6" text-anchor="middle" font-size="11" font-weight="bold" letter-spacing="0.75" fill="#101018" fill-opacity="0.3" font-family="Liberation Sans">LOUISIANA</text>
<text x="1219" y="783.6" text-anchor="middle" font-size="11" font-weight="bold" letter-spacing="0.75" fill="#101018" fill-opacity="0.3" font-family="Liberation Sans">FLORIDA</text>
<text x="759.2" y="448.5" text-anchor="middle" font-size="21" font-weight="bold" letter-spacing="2" fill="#3c3a08" fill-opacity="0.85" font-family="Liberation Sans">United States</text>
<text x="734.3" y="874.5" text-anchor="middle" font-size="18" font-weight="bold" fill="#111" font-family="Liberation Sans">Mexico</text>
<text x="1017.8" y="830.5" text-anchor="middle" font-size="11" fill="#34506e" font-family="Liberation Sans">Gulf of</text>
<text x="1017.8" y="843.5" text-anchor="middle" font-size="11" fill="#34506e" font-family="Liberation Sans">Mexico</text>
<text x="1291" y="847.5" text-anchor="middle" font-size="11" font-weight="bold" fill="#151515" font-family="Liberation Sans">The</text>
<text x="1291" y="858" text-anchor="middle" font-size="11" font-weight="bold" fill="#151515" font-family="Liberation Sans">Bahamas</text>
<text x="1592.8" y="654.7" text-anchor="middle" font-size="11" font-weight="bold" fill="#151515" font-family="Liberation Sans">Bermuda</text>
<text transform="translate(532.9,784.5) rotate(62)" text-anchor="middle" font-size="11" fill="#34506e" font-family="Liberation Sans" y="4">Gulf of California</text>
<text transform="translate(1722,125) rotate(-68)" text-anchor="middle" font-size="11" fill="#3a78c0" font-family="Liberation Sans" y="4">Gulf of St Lawrence</text>
<rect x="272" y="639" width="73" height="29" fill="#cdd889"/>
<text x="272" y="665" font-size="10.5" fill="#5d6f7f" font-family="Liberation Sans">0.10-0.50</text>
<rect x="272" y="697" width="73" height="29" fill="#52c47a"/>
<text x="272" y="723" font-size="10.5" fill="#5d6f7f" font-family="Liberation Sans">0.50-1.00</text>
<rect x="272" y="755" width="73" height="29" fill="#52a37a"/>
<text x="272" y="781" font-size="10.5" fill="#5d6f7f" font-family="Liberation Sans">1.00-2.00</text>
<rect x="272" y="813" width="73" height="29" fill="#7088fa"/>
<text x="272" y="839" font-size="10.5" fill="#5d6f7f" font-family="Liberation Sans">2.00-4.00</text>
</svg>
<div id="top"></div>
<div id="wm">Weather Maps</div>
<div class="ib" style="left:781px;"></div>
<div class="ib" style="left:808px;"></div>
<div class="ib" style="left:835px;"></div>
<div class="ib" style="left:862px;"></div>
<svg style="position:absolute;left:0;top:0;" width="1300" height="36" viewBox="0 0 1300 36">
<defs>
<g id="snow"><g stroke="#8cc0ec" stroke-width="1.6" fill="none" stroke-linecap="round">
<path d="M0,-10 V10 M-8.7,-5 L8.7,5 M-8.7,5 L8.7,-5"/>
<path d="M-3,-8 L0,-5 L3,-8 M-3,8 L0,5 L3,8 M-8.5,-1.5 L-4.5,-2.5 L-5.5,-6.5 M8.5,1.5 L4.5,2.5 L5.5,6.5 M-8.5,1.5 L-4.5,2.5 L-5.5,6.5 M8.5,-1.5 L4.5,-2.5 L5.5,-6.5"/>
</g></g>
<g id="cloudfill"><path d="M-10,5 C-14,5 -14,-2 -9,-2 C-9,-8 -1,-9 1,-4 C3,-8 10,-7 9,-1 C14,-1 14,5 10,5 Z" fill="#000"/></g>
</defs>
<rect x="782" y="4" width="24" height="26" fill="#fff"/>
<g transform="translate(794,17)">
<path d="M0,-13 L12,-5 L0,3 L-12,-5 Z" fill="#000"/>
<path d="M-12,0 L-9,-2 L0,4 L9,-2 L12,0 L0,8 Z" fill="#000"/>
<path d="M-12,5 L-9,3 L0,9 L9,3 L12,5 L0,13 Z" fill="#000"/>
</g>
<rect x="809" y="4" width="24" height="26" fill="#fff"/>
<use href="#snow" x="821.6" y="16.4"/>
<path d="M848.5,7 C852,12 855.8,16 855.8,20 C855.8,24 852.5,26 848.5,26 C844.5,26 841.2,24 841.2,20 C841.2,16 845,12 848.5,7 Z" fill="#1aaefc"/>
<g fill="none" stroke="#000" stroke-width="1.4">
<path d="M867,19 C863,19 863,13 867.5,13 C867.5,7 876,5 878.5,10 C881,8 886,10 885,14 C888.5,14 888.5,19 885,19 Z"/>
</g>
<g stroke="#000" stroke-width="1.2"><path d="M868,21 V27 M871,21 V26 M874,21 V28 M877,21 V26 M880,21 V27 M883,21 V25"/></g>
<g transform="translate(907,19)">
<path d="M-3,-11 C-3,-13.5 3,-13.5 3,-11 V5 C6,7 6,12 0,12.5 C-6,12 -6,7 -3,5 Z" fill="none" stroke="#000" stroke-width="1.8"/>
<path d="M-1.2,-3 H1.2 V6 C3.5,7 3.5,10.5 0,10.7 C-3.5,10.5 -3.5,7 -1.2,6 Z" fill="#000"/>
</g>
<g fill="none" stroke="#2a8cf0" stroke-width="2" stroke-linecap="round">
<path d="M926,17 H944 C948,17 949,12 945,11 C942,10.5 941,13 942,14"/>
<path d="M929,21 H946 C950,21 950,26 946,27 C943,27.5 943,25 944,24"/>
<path d="M925,14 H937 C940,14 941,10 938,9.5"/>
</g>
<circle cx="968.3" cy="18.9" r="11" fill="#5aa04a"/>
<path d="M968.3,18.9 L960,11 A11,11 0 0 1 975,10.5 Z" fill="#e84a2a"/>
<path d="M968.3,18.9 L975,10.5 A11,11 0 0 1 978,24 Z" fill="#3a6fc0"/>
<path d="M968.3,18.9 L962,27 A11,11 0 0 1 958,16 Z" fill="#f0c030"/>
<circle cx="968.3" cy="18.9" r="11" fill="none" stroke="#999" stroke-width="0.8"/>
<rect x="986" y="7" width="25" height="25" fill="#fff"/>
<use href="#snow" x="998" y="19.5"/>
<path d="M1029.3,10 C1032.5,14.5 1036.3,18.5 1036.3,22 C1036.3,26 1033,28.8 1029.3,28.8 C1025.6,28.8 1022.3,26 1022.3,22 C1022.3,18.5 1026,14.5 1029.3,10 Z" fill="#1aaefc"/>
<rect x="1048" y="7" width="25" height="25" fill="#fff"/>
<g transform="translate(1062,19)">
<path d="M-2,-12 C-2,-13.5 2,-13.5 2,-12 V5 C5,7 5,12 0,12.5 C-5,12 -5,7 -2,5 Z" fill="none" stroke="#000" stroke-width="1.5"/>
<path d="M-1,-5 H1 V6 C3.5,7 3.5,11 0,11.2 C-3.5,11 -3.5,7 -1,6 Z" fill="#000"/>
<path d="M-7,-9 H-5 M-7,-5 H-5 M-7,-1 H-5 M-7,3 H-5 M-9,-3 L-6,-3" stroke="#000" stroke-width="1"/>
</g>
<rect x="1078" y="7" width="25" height="25" fill="#fff"/>
<g fill="none" stroke="#000" stroke-width="2" stroke-linecap="round">
<path d="M1079,19 H1098 C1102,19 1103,14 1099,13 C1096,12.5 1095,15 1096,16"/>
<path d="M1083,23 H1098 C1101,23 1101,28 1098,28 C1095,28 1095,26 1096,25"/>
<path d="M1081,15.5 H1090 C1093,15.5 1094,11 1091,10.5"/>
</g>
<rect x="1109" y="7" width="25" height="25" fill="#fff"/>
<path d="M1115,22 C1112,22 1112,17.5 1115.5,17.5 C1115.5,13 1122,12 1124,15.5 C1126,14 1129,15.5 1128.5,18 C1131,18 1131,22 1128.5,22 Z" fill="none" stroke="#000" stroke-width="1"/>
<path d="M1117,24 V28 M1119.5,24 V27 M1122,24 V28 M1124.5,24 V27 M1127,24 V28" stroke="#000" stroke-width="0.8"/>
<rect x="1140" y="7" width="25" height="25" fill="#fff"/>
<use href="#cloudfill" x="1153" y="17"/>
<path d="M1150,23 L1148,27 L1151,27 L1149,31 M1156,23 L1154,27 L1157,27 L1155,31" stroke="#000" stroke-width="1.2" fill="none"/>
<rect x="1170" y="7" width="25" height="25" fill="#fff"/>
<use href="#cloudfill" x="1183" y="17"/>
<path d="M1180,23 L1178,27 L1181,27 L1179,31 M1186,23 L1184,27 L1187,27 L1185,31" stroke="#000" stroke-width="1.2" fill="none"/>
<rect x="1201" y="7" width="25" height="25" fill="#fff"/>
<path d="M1206,22 C1202,22 1202,16 1206.5,16 C1206.5,10 1214,9 1217,13 C1219,11 1224,13 1223,17 C1226,17 1226,22 1223,22 Z" fill="none" stroke="#000" stroke-width="1.5"/>
<circle cx="1210" cy="27" r="1.3" fill="#000"/><circle cx="1216" cy="25" r="1.3" fill="#000"/><circle cx="1219" cy="29" r="1.3" fill="#000"/>
<rect x="1230" y="3" width="26" height="29" fill="#fff"/>
<g fill="none" stroke="#000" stroke-width="2.2" stroke-linecap="round">
<path d="M1232,7 C1238,4 1252,5 1254,8 C1250,11 1238,11 1234,9"/>
<path d="M1235,12 C1240,11 1250,11 1251,13 C1247,16 1240,16 1237,14"/>
<path d="M1238,17 C1242,16 1248,16 1248,18 C1245,21 1241,21 1239,19"/>
<path d="M1240,22 C1243,22 1245,22 1245,24 C1243,26 1242,27 1243,30"/>
</g>
</svg>
<div style="position:absolute;left:0;top:882px;width:1747px;height:2px;background:#fff;"></div>

<div id="ctl"><div class="m">Map</div><div class="s">Satellite</div></div>
<div id="leg">
<div class="t1">5 Day Precipitation Outlook</div>
<div class="t2">7 PM CDT Monday, July 6, 2020</div>
<div class="bar" style="left:24px;background:#f0cc00;">.1-.5</div>
<div class="bar" style="left:57px;background:#00a400;">.5-1.</div>
<div class="bar" style="left:89px;background:#007000;">1.-2.</div>
<div class="bar" style="left:121px;background:#3838f8;">2.-4.</div>
<div class="bar" style="left:153px;background:#a000c0;">4.00+</div>
</div>
<div id="botbar"></div>
<svg style="position:absolute;left:0;top:856px;" width="66" height="26" viewBox="0 0 66 26">
<text x="0" y="19" font-family="Liberation Sans" font-size="20" font-weight="normal" letter-spacing="-0.3"><tspan fill="#4a8af4">G</tspan><tspan fill="#e94235">o</tspan><tspan fill="#fabb05">o</tspan><tspan fill="#4a8af4">g</tspan><tspan fill="#34a853">l</tspan><tspan fill="#e94235">e</tspan></text>
</svg>
<div id="act1">Activate Windows</div>
<div id="act2">Go to Settings to activate Windows.</div>
<div id="mapdata">Map data ©2020</div>
</body></html>
